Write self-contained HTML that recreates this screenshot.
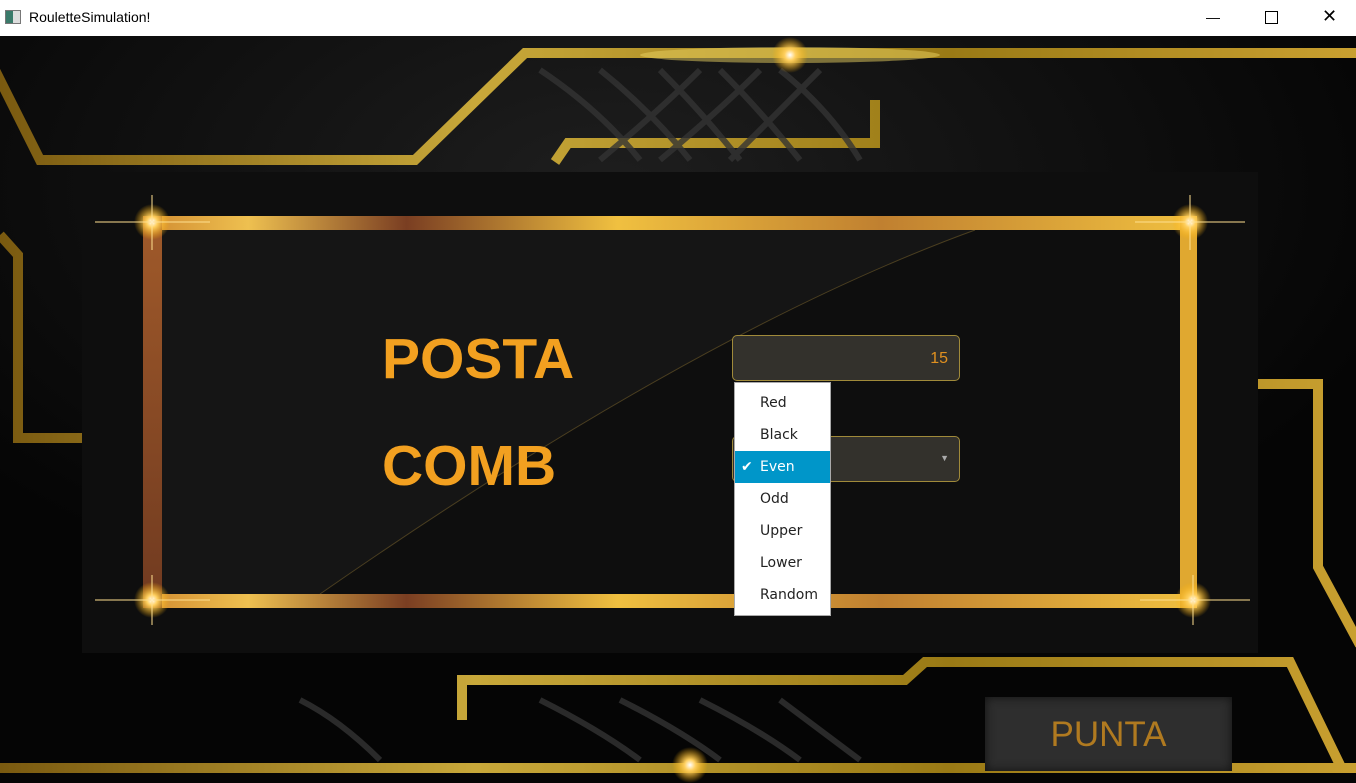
<!DOCTYPE html>
<html><head><style>
body{margin:0;width:1356px;height:783px;overflow:hidden;font-family:"Liberation Sans",sans-serif;background:#0b0b0b;position:relative}
.title{position:absolute;left:0;top:0;width:1356px;height:36px;background:#fff}
.title span{position:absolute;left:29px;top:9px;font-size:14px;color:#000}
.ico{position:absolute;left:5px;top:10px;width:14px;height:12px;border:1px solid #777;background:linear-gradient(90deg,#3a7a6a 50%,#ddd 50%)}
.ctl{position:absolute;top:8px;font-size:16px;color:#000}
.lbl{position:absolute;color:#f2a020;font-weight:bold;font-size:57px}
.inp{position:absolute;left:732px;width:228px;height:46px;background:#33312c;border:1px solid #a08a3a;border-radius:5px;box-sizing:border-box}
.menu{position:absolute;left:734px;top:382px;width:97px;height:234px;background:#fff;border:1px solid #aaa;box-sizing:border-box;padding-top:4px;font-family:"DejaVu Sans",sans-serif;font-size:14px;color:#222}
.menu div{height:32px;line-height:32px;padding-left:25px;position:relative}
.menu .sel{background:#0096c9;color:#fff}
.punta{position:absolute;left:985px;top:697px;width:247px;height:74px;background:#2e2e2e;box-shadow:inset 0 0 10px #111;color:#b07a20;font-size:35px;text-align:center;line-height:76px}
</style></head><body>
<svg width="1356" height="783" style="position:absolute;left:0;top:0">
<defs>
<linearGradient id="g" gradientUnits="userSpaceOnUse" x1="0" y1="0" x2="1356" y2="0"><stop offset="0" stop-color="#7a5a10"/><stop offset=".35" stop-color="#c8a83a"/><stop offset=".7" stop-color="#9a7a15"/><stop offset="1" stop-color="#c9a030"/></linearGradient>
<linearGradient id="f" x1="0" x2="1"><stop offset="0" stop-color="#d08a30"/><stop offset=".1" stop-color="#eec050"/><stop offset=".25" stop-color="#7a3e22"/><stop offset=".45" stop-color="#f0c040"/><stop offset=".7" stop-color="#c08030"/><stop offset="1" stop-color="#f0c040"/></linearGradient>
<linearGradient id="v" x1="0" y1="0" x2="0" y2="1"><stop offset="0" stop-color="#a05a2a"/><stop offset="1" stop-color="#703a20"/></linearGradient>
<radialGradient id="s"><stop offset="0" stop-color="#fff"/><stop offset=".3" stop-color="#ffd060"/><stop offset="1" stop-color="#ffb000" stop-opacity="0"/></radialGradient>
<radialGradient id="bg" cx=".45" cy=".2" r=".6"><stop offset="0" stop-color="#1e1e1e"/><stop offset="1" stop-color="#050505"/></radialGradient>
</defs>
<rect x="0" y="36" width="1356" height="747" fill="url(#bg)"/>
<g stroke="url(#g)" fill="none" stroke-width="10">
<polyline points="-5,70 40,160 415,160 525,53 1360,53"/>
<polyline points="555,162 568,143 875,143 875,100"/>
<polyline points="0,235 18,255 18,438 82,438"/>
<polyline points="1258,384 1318,384 1318,567 1360,645"/>
<polyline points="462,720 462,680 905,680 925,662 1290,662 1340,765"/>
<polyline points="0,768 1360,768"/>
</g>
<g stroke="#333" stroke-width="6" fill="none" opacity=".8">
<path d="M540,70 Q600,110 640,160 M600,70 Q650,110 690,160 M660,70 Q700,110 740,160 M720,70 Q760,110 800,160 M780,70 Q830,110 860,160 M700,70 Q660,110 600,160 M760,70 Q720,110 660,160 M820,70 Q780,110 730,160"/>
<path d="M300,700 Q340,720 380,760 M540,700 Q600,730 640,760 M620,700 Q680,730 720,760 M700,700 Q760,730 800,760 M780,700 Q820,730 860,760"/>
</g>
<ellipse cx="790" cy="55" rx="150" ry="8" fill="#e8d060" opacity=".5"/>
<rect x="82" y="172" width="1176" height="481" fill="#0e0e0e"/>
<path d="M162,230 L975,230 Q700,330 320,594 L162,594Z" fill="#151515"/>
<path d="M975,230 Q700,330 320,594" stroke="#4a3e20" stroke-width="1" fill="none"/>
<rect x="143" y="216" width="1054" height="14" fill="url(#f)"/>
<rect x="143" y="594" width="1054" height="14" fill="url(#f)"/>
<rect x="143" y="216" width="19" height="392" fill="url(#v)"/>
<rect x="1180" y="216" width="17" height="392" fill="#e0a830"/>
<g fill="url(#s)">
<circle cx="152" cy="222" r="18"/><circle cx="1190" cy="222" r="18"/><circle cx="152" cy="600" r="18"/><circle cx="1193" cy="600" r="18"/><circle cx="790" cy="55" r="18"/><circle cx="690" cy="765" r="18"/>
</g>
<g stroke="#ffe090" stroke-width="2" opacity=".5">
<line x1="95" y1="222" x2="210" y2="222"/><line x1="152" y1="195" x2="152" y2="250"/>
<line x1="1135" y1="222" x2="1245" y2="222"/><line x1="1190" y1="195" x2="1190" y2="250"/>
<line x1="95" y1="600" x2="210" y2="600"/><line x1="152" y1="575" x2="152" y2="625"/>
<line x1="1140" y1="600" x2="1250" y2="600"/><line x1="1193" y1="575" x2="1193" y2="625"/>
</g>
</svg>
<div class="title"><div class="ico"></div><span>RouletteSimulation!</span>
<span class="ctl" style="left:1206px">&#8212;</span>
<div style="position:absolute;left:1265px;top:11px;width:11px;height:11px;border:1px solid #000"></div>
<span class="ctl" style="left:1322px;top:6px;font-size:18px">&#10005;</span></div>
<div class="lbl" style="left:382px;top:326px">POSTA</div>
<div class="lbl" style="left:382px;top:433px">COMB</div>
<div class="inp" style="top:335px"><span style="position:absolute;right:11px;top:14px;color:#e09020;font-size:16px">15</span></div>
<div class="inp" style="top:436px"><span style="position:absolute;right:10px;top:16px;color:#aaa;font-size:9px">&#9660;</span></div>
<div class="menu">
<div>Red</div><div>Black</div><div class="sel"><span style="position:absolute;left:6px">&#10004;</span>Even</div><div>Odd</div><div>Upper</div><div>Lower</div><div>Random</div>
</div>
<div class="punta">PUNTA</div>
</body></html>
